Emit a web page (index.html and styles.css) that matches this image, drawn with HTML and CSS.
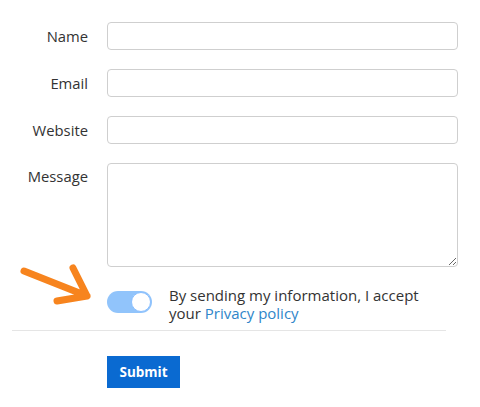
FILE: index.html
```html
<!DOCTYPE html>
<html>
<head>
<meta charset="utf-8">
<link rel="stylesheet" href="styles.css">
</head>
<body>
<form class="form">
  <div class="row">
    <label class="label">Name</label>
    <input class="field" type="text">
  </div>
  <div class="row">
    <label class="label">Email</label>
    <input class="field" type="text">
  </div>
  <div class="row">
    <label class="label">Website</label>
    <input class="field" type="text">
  </div>
  <div class="row row-top">
    <label class="label label-top">Message</label>
    <textarea class="field area"></textarea>
  </div>
  <div class="row consent">
    <div class="spacer">
      <svg class="arrow" width="100" height="60" viewBox="0 0 100 60">
        <path d="M24 15 L87 40 M73 12 L87 40 L57 45" fill="none" stroke="#f7841e" stroke-width="7" stroke-linecap="round" stroke-linejoin="round"/>
      </svg>
    </div>
    <span class="toggle"><span class="knob"></span></span>
    <p class="consent-text">By sending my information, I accept your <a class="link" href="#">Privacy policy</a></p>
  </div>
  <hr class="divider">
  <div class="row">
    <div class="spacer"></div>
    <button class="submit" type="button">Submit</button>
  </div>
</form>
</body>
</html>
```
FILE: styles.css
```css
body {
  margin: 0;
  background: #ffffff;
  font-family: "Open Sans", "DejaVu Sans", sans-serif;
  color: #333333;
}
.form {
  padding: 22px 22px 0 0;
  width: 458px;
}
.row {
  display: flex;
  align-items: center;
  margin-bottom: 19px;
}
.row-top {
  align-items: flex-start;
}
.label {
  width: 88px;
  flex: none;
  text-align: right;
  font-size: 14.8px;
  margin-right: 19px;
  color: #333;
}
.label-top {
  margin-top: 3px;
}
.field {
  box-sizing: border-box;
  width: 351px;
  height: 28px;
  border: 1px solid #cfcfcf;
  border-radius: 4px;
  margin: 0;
  padding: 4px 8px;
  font: inherit;
  background: #fff;
}
.area {
  height: 104px;
  resize: vertical;
  display: block;
}
.consent {
  margin-bottom: 0;
  align-items: flex-start;
}
.spacer {
  width: 107px;
  flex: none;
  position: relative;
  height: 10px;
}
.arrow {
  position: absolute;
  left: 0;
  top: -30px;
}
.toggle {
  flex: none;
  width: 45px;
  height: 22px;
  border-radius: 11px;
  background: #91c4fb;
  position: relative;
  margin-top: 5px;
}
.knob {
  position: absolute;
  right: 1px;
  top: 1px;
  width: 18px;
  height: 18px;
  border-radius: 50%;
  background: #fff;
  border: 1px solid #8abfff;
}
.consent-text {
  margin: 0 0 0 17px;
  font-size: 15px;
  line-height: 18px;
  color: #333;
  width: 268px;
}
.link {
  color: #2f86c9;
  text-decoration: none;
}
.divider {
  border: 0;
  border-top: 1px solid #e5e5e5;
  margin: 8px 0 25px 12px;
  width: 434px;
}
.submit {
  width: 73px;
  height: 32px;
  background: #0a6ad1;
  color: #fff;
  border: 0;
  border-radius: 0;
  font-family: "Open Sans", "DejaVu Sans", sans-serif;
  font-weight: 700;
  font-size: 13.5px;
  padding: 0;
}
```
